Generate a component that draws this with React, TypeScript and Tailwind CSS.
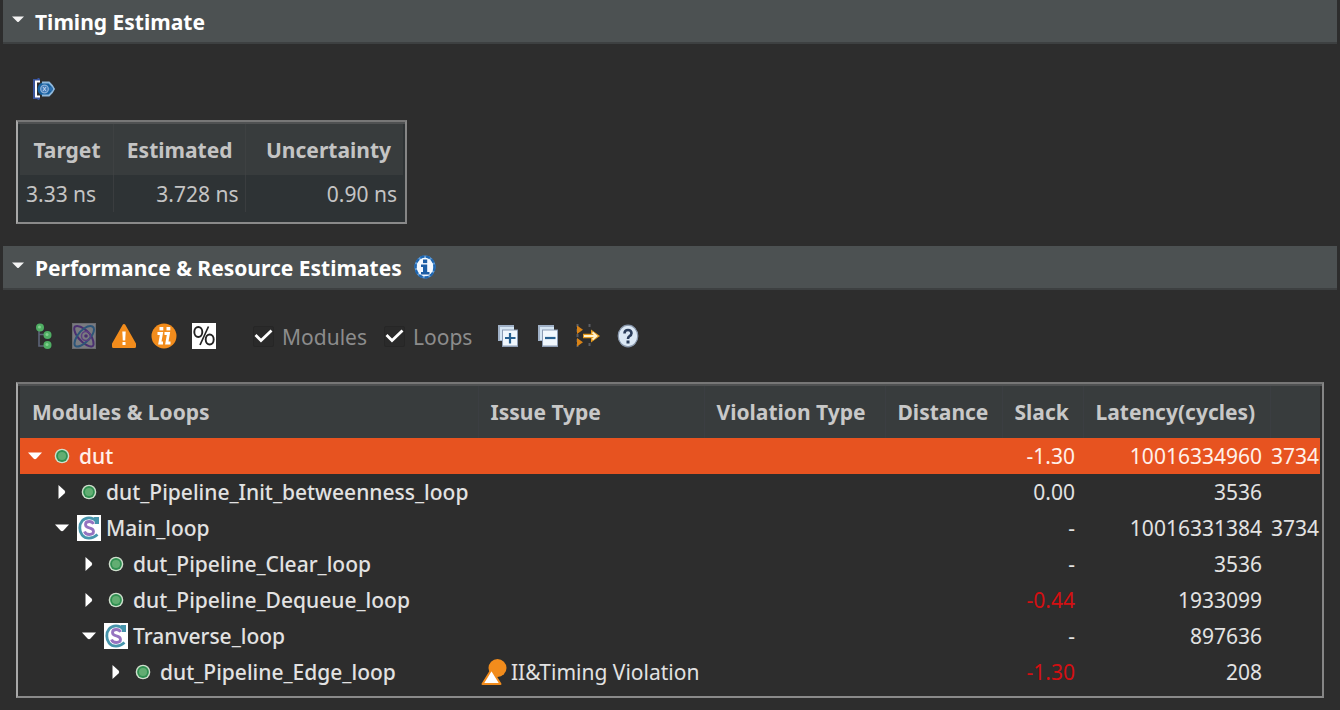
import { useState } from "react";
import type { ReactNode } from "react";

type Kind = "module" | "loop";

interface Row {
  id: string;
  name: string;
  level: number;
  open: boolean;
  kind: Kind;
  issue?: string;
  slack: string;
  latency: string;
  latencyNs?: string;
}

const rows: Row[] = [
  { id: "dut", name: "dut", level: 0, open: true, kind: "module", slack: "-1.30", latency: "10016334960", latencyNs: "3734" },
  { id: "init", name: "dut_Pipeline_Init_betweenness_loop", level: 1, open: false, kind: "module", slack: "0.00", latency: "3536" },
  { id: "main", name: "Main_loop", level: 1, open: true, kind: "loop", slack: "-", latency: "10016331384", latencyNs: "3734" },
  { id: "clear", name: "dut_Pipeline_Clear_loop", level: 2, open: false, kind: "module", slack: "-", latency: "3536" },
  { id: "dequeue", name: "dut_Pipeline_Dequeue_loop", level: 2, open: false, kind: "module", slack: "-0.44", latency: "1933099" },
  { id: "tranverse", name: "Tranverse_loop", level: 2, open: true, kind: "loop", slack: "-", latency: "897636" },
  { id: "edge", name: "dut_Pipeline_Edge_loop", level: 3, open: false, kind: "module", issue: "II&Timing Violation", slack: "-1.30", latency: "208" },
];

const indents = ["pl-0", "pl-[27px]", "pl-[54px]", "pl-[81px]"];

function DownArrow() {
  return (
    <svg width="14" height="8" viewBox="0 0 14 8" aria-hidden="true">
      <path d="M0 0.5H14L8.5 6.5Q7 8 5.500 6.500Z" fill="#fff" />
    </svg>
  );
}

function RightArrow() {
  return (
    <svg width="8" height="14" viewBox="0 0 8 14" aria-hidden="true">
      <path d="M0.500 0V14L6.500 8.500Q8 7 6.500 5.500Z" fill="#fff" />
    </svg>
  );
}

function SectionArrow() {
  return (
    <svg width="12" height="7" viewBox="0 0 12 7" aria-hidden="true">
      <path d="M0 0.500H12L7 5.500Q6 6.500 5 5.500Z" fill="#f4f4f4" />
    </svg>
  );
}

function InfoIcon() {
  return (
    <svg width="22" height="24" viewBox="0 0 22 24" aria-hidden="true">
      <ellipse cx="11" cy="12" rx="9.500" ry="10.500" fill="#f4f9ff" stroke="#5d9ad6" strokeWidth="2" />
      <ellipse cx="11" cy="12" rx="9.500" ry="10.500" fill="none" stroke="#1f66b0" strokeWidth="2.400" strokeDasharray="4 2" />
      <rect x="9" y="4.500" width="4.200" height="3.600" fill="#1c5ea6" />
      <path d="M7 9.500H13.200V17H15.500V19.500H7V17H9V12H7Z" fill="#1c5ea6" />
    </svg>
  );
}

function ClockRangeIcon() {
  return (
    <svg width="24" height="24" viewBox="0 0 24 24" aria-hidden="true">
      <path d="M8 3H2V21H8M6.500 1V3M6.500 21V23" fill="none" stroke="#3a559c" strokeWidth="2" />
      <path d="M8 4.500H4V19.500H8" fill="none" stroke="#fff" strokeWidth="2" />
      <ellipse cx="13" cy="12" rx="7.500" ry="7" fill="#17609f" />
      <path d="M10 5.500H17L20 8.500L22 12L20 15.500L17 18.500H10" fill="none" stroke="#8fb8dc" strokeWidth="1.800" />
      <circle cx="12.500" cy="12" r="3.800" fill="#3d7ab8" stroke="#8db0d8" strokeWidth="1.300" />
      <path d="M11 10L14 14M14 10L11 14" stroke="#b4c8e6" strokeWidth="1.200" />
      <circle cx="19" cy="12" r="2" fill="#2b6fb0" />
    </svg>
  );
}

function TreeIcon() {
  return (
    <svg width="24" height="28" viewBox="0 0 24 28" aria-hidden="true">
      <path d="M7 7V24H14M7 12.500H14" fill="none" stroke="#5d6478" strokeWidth="1.600" />
      <circle cx="8" cy="5.500" r="4" fill="#4fae63" />
      <circle cx="15.500" cy="13" r="4" fill="#4fae63" />
      <circle cx="15.500" cy="23" r="4" fill="#4fae63" />
      <circle cx="7.500" cy="5" r="1.500" fill="#83cf8e" />
      <circle cx="15" cy="12.500" r="1.500" fill="#83cf8e" />
      <circle cx="15" cy="22.500" r="1.500" fill="#83cf8e" />
    </svg>
  );
}

function AtomIcon() {
  return (
    <svg width="24" height="26" viewBox="0 0 24 26" aria-hidden="true">
      <rect width="24" height="26" fill="#7a7b80" />
      <g fill="none" strokeWidth="2">
        <path d="M3 3.500C8 1.500 17 8 20 14.500C22.500 20 22 24 19 23.500C14 23 6.500 17 3.500 10.500C2 7 2 4.500 3 3.500Z" stroke="#4a2f70" />
        <path d="M20.500 3.500C16 1.500 8.500 7 5 13C2 18.500 1.500 23 4.500 23.500C9 24 17 18 20.500 11.500C22.500 7.500 22.500 4.500 20.500 3.500Z" stroke="#2d5578" />
        <circle cx="14" cy="13" r="4.500" stroke="#5c3f80" strokeWidth="1.500" />
      </g>
      <circle cx="14" cy="13" r="1.800" fill="#4a2f70" />
      <rect x="0.500" y="0.500" width="23" height="25" fill="none" stroke="#6a6b70" />
    </svg>
  );
}

function WarningIcon() {
  return (
    <svg width="26" height="26" viewBox="0 0 26 26" aria-hidden="true">
      <path d="M13 2.500L23.500 21V23.500H2.500V21Z" fill="#f28c1c" stroke="#f28c1c" strokeWidth="3" strokeLinejoin="round" />
      <path d="M11.300 8.500H14.700L14.200 17.500H11.800Z" fill="#fff" />
      <rect x="11.500" y="19" width="3" height="3" fill="#fff" />
    </svg>
  );
}

function IiIcon() {
  return (
    <svg width="26" height="26" viewBox="0 0 26 26" aria-hidden="true">
      <circle cx="13" cy="13" r="12.500" fill="#f28c1c" />
      <g fill="#fff">
        <rect x="8.500" y="4" width="3.800" height="3.400" />
        <rect x="15.500" y="4" width="3.800" height="3.400" />
      </g>
      <path d="M6.500 10.500H10.500L8.800 20H12M13.500 10.500H17.500L15.800 20H19.500" fill="none" stroke="#fff" strokeWidth="2.800" />
    </svg>
  );
}

function PercentIcon() {
  return (
    <svg width="24" height="26" viewBox="0 0 24 26" aria-hidden="true">
      <rect width="24" height="26" fill="#fff" />
      <g fill="none" stroke="#222" strokeWidth="1.900">
        <ellipse cx="6.300" cy="9" rx="4" ry="5" />
        <ellipse cx="17.700" cy="16.500" rx="4" ry="5" />
        <path d="M16.500 3.500L8 22" strokeWidth="1.700" />
      </g>
    </svg>
  );
}

function StackIcon({ plus }: { plus: boolean }) {
  return (
    <svg width="20" height="22" viewBox="0 0 20 22" aria-hidden="true">
      <rect x="0" y="0" width="16" height="16" fill="#9fb0c6" />
      <rect x="2" y="2" width="14" height="13" fill="#d5e5f3" />
      <rect x="4" y="4.500" width="16" height="17.500" fill="#8c9cb4" />
      <rect x="5" y="5.500" width="14" height="15" fill="#f0f7fd" />
      <path d={plus ? "M7 13H17.500M12 8V18.500" : "M7 13H17.500"} stroke="#27608f" strokeWidth="2.200" />
    </svg>
  );
}

function FlowIcon() {
  return (
    <svg width="24" height="26" viewBox="0 0 24 26" aria-hidden="true">
      <path d="M1.500 1V25M13.500 1V6M13.500 20V25" stroke="#5b5d63" strokeWidth="2" strokeDasharray="3 2" />
      <path d="M1 2.500L7 6.800L1 11ZM1 15L7 19.200L1 23.500Z" fill="#d98316" />
      <path d="M7 13H17" stroke="#e39a1f" strokeWidth="4.500" />
      <path d="M15 6.500L24 13L15 19.500Z" fill="#e39a1f" />
      <path d="M8 13H19.500M16.500 9.500L20.500 13L16.500 16.500" fill="none" stroke="#fff3cf" strokeWidth="1.800" />
    </svg>
  );
}

function HelpIcon() {
  return (
    <svg width="22" height="24" viewBox="0 0 22 24" aria-hidden="true">
      <ellipse cx="11" cy="12" rx="9.800" ry="10.800" fill="#dbe8f5" stroke="#8796ab" strokeWidth="1.200" />
      <path d="M7.500 9.500Q7.500 6 11 6T14.500 9.300Q14.500 11.300 12.300 12.300Q11 13 11 15" fill="none" stroke="#2c3e5c" strokeWidth="2.600" />
      <rect x="9.500" y="16.500" width="3" height="3" fill="#2c3e5c" />
    </svg>
  );
}

function ModuleIcon() {
  return (
    <svg width="16" height="16" viewBox="0 0 16 16" aria-hidden="true">
      <circle cx="8" cy="8" r="7.300" fill="#cfe0cd" />
      <circle cx="8" cy="8" r="5.900" fill="#319052" />
      <circle cx="8" cy="8" r="4" fill="#62ad72" />
    </svg>
  );
}

function LoopIcon() {
  return (
    <svg width="24" height="26" viewBox="0 0 24 26" aria-hidden="true">
      <rect width="24" height="26" fill="#fff" />
      <path d="M19.500 6Q16.500 2.800 12 2.800C6 2.800 2.800 7.500 2.800 13S6 23.200 12 23.200Q16.500 23.200 20.500 19.500" fill="none" stroke="#4795ac" strokeWidth="2.800" />
      <path d="M17 2H22V9H18Z" fill="#4795ac" />
      <path d="M16.500 9Q15.500 6.500 12.300 6.500Q8.500 6.500 8.500 9.500Q8.500 12 12.300 12.800Q16.500 13.700 16.500 16.500Q16.500 19.500 12.300 19.500Q8.500 19.500 7.500 16.500" fill="none" stroke="#9673c0" strokeWidth="2.800" />
    </svg>
  );
}

function IssueIcon() {
  return (
    <svg width="26" height="28" viewBox="0 0 26 28" aria-hidden="true">
      <circle cx="16.500" cy="10" r="9" fill="#f28c1c" />
      <path d="M10.500 11.500L19.500 26H1.500Z" fill="#fff" stroke="#f28c1c" strokeWidth="2" strokeLinejoin="round" />
    </svg>
  );
}

function SectionHeader({ title, open, onToggle, children }: { title: string; open: boolean; onToggle: () => void; children?: ReactNode }) {
  return (
    <header className="mx-[3px] flex h-11 items-center gap-3 border-b-2 border-[#3d4041] bg-[#4c5152]">
      <h2 className="pt-px text-[21px] leading-6 font-bold text-white">
        <button type="button" aria-expanded={open} onClick={onToggle} className="flex items-center gap-[11px] pl-[9px]">
          <span className={open ? "pb-1" : "-rotate-90"}>
            <SectionArrow />
          </span>
          {title}
        </button>
      </h2>
      {children}
    </header>
  );
}

function ToolButton({ label, children }: { label: string; children: ReactNode }) {
  return (
    <button type="button" aria-label={label} title={label} className="flex size-10 items-center justify-center">
      {children}
    </button>
  );
}

function CheckOption({ id, label }: { id: string; label: string }) {
  return (
    <div className="flex items-center gap-2">
      <span className="grid size-[21px] place-items-center">
        <input
          id={id}
          type="checkbox"
          defaultChecked
          className="peer col-start-1 row-start-1 size-[21px] appearance-none rounded-xs border border-[#262626] bg-[#2a2a2a]"
        />
        <svg width="19" height="14" viewBox="0 0 19 14" aria-hidden="true" className="pointer-events-none invisible col-start-1 row-start-1 peer-checked:visible">
          <path d="M1.500 6L7 11.500L17.500 1.500" fill="none" stroke="#fff" strokeWidth="2.800" />
        </svg>
      </span>
      <label htmlFor={id} className="pt-px text-[21px] leading-6 text-[#8c8c8c]">
        {label}
      </label>
    </div>
  );
}

const frame =
  "border-2 border-t-[#777777] border-r-[#858585] border-b-[#8a8a8a] border-l-[#a8a8a8] p-[2px] shadow-[inset_0_2px_0_#4f5152]";

function TimingTable() {
  return (
    <div className={`w-fit bg-[#2e3335] pb-[10px] ${frame}`}>
      <table className="table-fixed border-collapse text-[21px] leading-6 text-[#c4c4c4]">
        <colgroup>
          <col className="w-[93px]" />
          <col className="w-[132px]" />
          <col className="w-[158px]" />
        </colgroup>
        <thead>
          <tr className="h-[51px] bg-[#383c3d]">
            <th scope="col" className="border-r border-[#3e4142] pr-3 text-right font-bold">Target</th>
            <th scope="col" className="border-r border-[#3e4142] pr-3 text-right font-bold">Estimated</th>
            <th scope="col" className="pr-3 text-right font-bold">Uncertainty</th>
          </tr>
        </thead>
        <tbody>
          <tr className="h-[37px]">
            <td className="border-r border-[#3a3d3f] pl-[6px] text-left">3.33 ns</td>
            <td className="border-r border-[#3a3d3f] pr-[6px] text-right">3.728 ns</td>
            <td className="pr-[6px] text-right">0.90 ns</td>
          </tr>
        </tbody>
      </table>
    </div>
  );
}

function PerformanceTable() {
  const [selected, setSelected] = useState("dut");
  return (
    <div className={`mx-4 overflow-hidden pb-[6px] ${frame}`}>
      <table className="w-full table-fixed border-collapse text-[21px] leading-6 whitespace-nowrap text-[#e2e2e2]">
        <colgroup>
          <col />
          <col className="w-[226px]" />
          <col className="w-[181px]" />
          <col className="w-[117px]" />
          <col className="w-[81px]" />
          <col className="w-[187px]" />
          <col className="w-[50px]" />
        </colgroup>
        <thead>
          <tr className="h-[52px] bg-[#383c3d] text-left text-[#c8c8c8]">
            {["Modules & Loops", "Issue Type", "Violation Type", "Distance", "Slack", "Latency(cycles)"].map((title) => (
              <th key={title} scope="col" className="border-r border-[#3b3e42] pb-px pl-3 font-bold">
                {title}
              </th>
            ))}
            <td />
          </tr>
        </thead>
        <tbody>
          {rows.map((row) => {
            const active = row.id === selected;
            const violated = row.slack.startsWith("-") && row.slack.length > 1;
            return (
              <tr key={row.id} aria-selected={active} onClick={() => setSelected(row.id)} className={active ? "h-9 bg-[#e75320] text-[#fff0ea]" : "h-9"}>
                <td className="p-0">
                  <div className={`flex items-center ${indents[row.level]}`}>
                    <button type="button" aria-label={`Toggle ${row.name}`} aria-expanded={row.open} className="flex h-6 w-[30px] items-center justify-center">
                      {row.open ? <DownArrow /> : <RightArrow />}
                    </button>
                    <span className="flex h-6 w-6 items-center justify-center">{row.kind === "module" ? <ModuleIcon /> : <LoopIcon />}</span>
                    <span className="pl-[5px] font-medium">{row.name}</span>
                  </div>
                </td>
                <td className="p-0">
                  {row.issue && (
                    <div className="flex h-6 items-center gap-1 pl-[3px]">
                      <IssueIcon />
                      {row.issue}
                    </div>
                  )}
                </td>
                <td />
                <td />
                <td className={violated && !active ? "p-0 pr-2 text-right text-[#d40f12]" : "p-0 pr-2 text-right"}>{row.slack}</td>
                <td className="p-0 pr-2 text-right">{row.latency}</td>
                <td className="overflow-hidden p-0 pl-px">{row.latencyNs}</td>
              </tr>
            );
          })}
        </tbody>
      </table>
    </div>
  );
}

export default function App() {
  const [timingOpen, setTimingOpen] = useState(true);
  const [perfOpen, setPerfOpen] = useState(true);
  return (
    <main className="min-h-screen bg-[#2d2d2d] pb-3 font-['Noto_Sans','Open_Sans',sans-serif]">
      <section className="pb-[22px]">
        <SectionHeader title="Timing Estimate" open={timingOpen} onToggle={() => setTimingOpen(!timingOpen)} />
        {timingOpen && (
          <div className="px-4 pt-[25px]">
            <div className="flex px-2 pb-[11px]">
              <ToolButton label="Timing details">
                <ClockRangeIcon />
              </ToolButton>
            </div>
            <TimingTable />
          </div>
        )}
      </section>
      <section>
        <SectionHeader title="Performance & Resource Estimates" open={perfOpen} onToggle={() => setPerfOpen(!perfOpen)}>
          <InfoIcon />
        </SectionHeader>
        {perfOpen && (
          <>
            <div className="flex items-center px-6 py-[26px]">
              <ToolButton label="Hierarchy"><TreeIcon /></ToolButton>
              <ToolButton label="Resources"><AtomIcon /></ToolButton>
              <ToolButton label="Timing violations"><WarningIcon /></ToolButton>
              <ToolButton label="II violations"><IiIcon /></ToolButton>
              <ToolButton label="Show percentages"><PercentIcon /></ToolButton>
              <div className="flex gap-[17px] pr-4 pl-[29px]">
                <CheckOption id="modules" label="Modules" />
                <CheckOption id="loops" label="Loops" />
              </div>
              <ToolButton label="Expand all"><StackIcon plus /></ToolButton>
              <ToolButton label="Collapse all"><StackIcon plus={false} /></ToolButton>
              <ToolButton label="Go to flow"><FlowIcon /></ToolButton>
              <ToolButton label="Help"><HelpIcon /></ToolButton>
            </div>
            <PerformanceTable />
          </>
        )}
      </section>
    </main>
  );
}
